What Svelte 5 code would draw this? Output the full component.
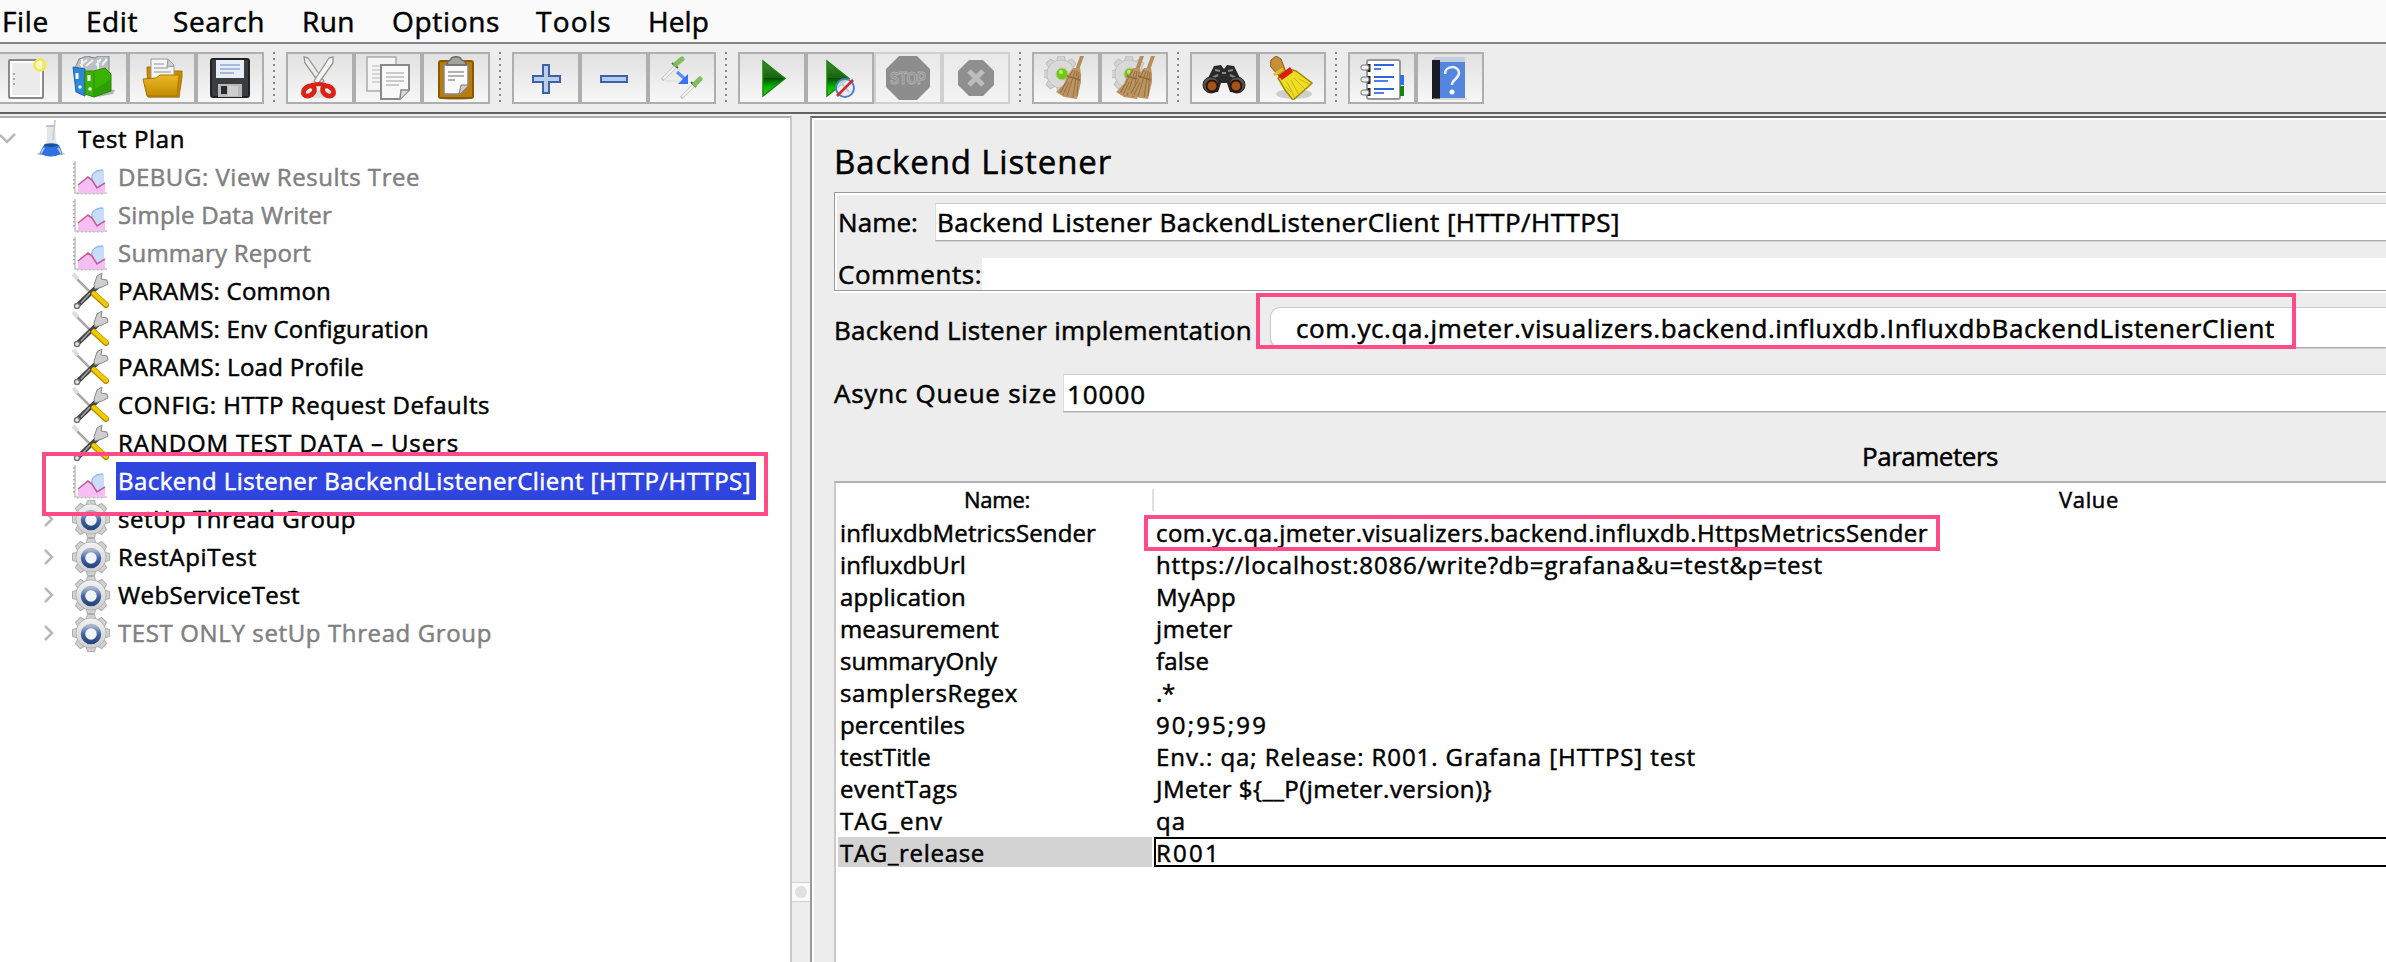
<script>
  // Spreads letters so that a label takes its nominal width.
  function fit(node, width) {
    if (!width) return;
    const natural = node.getBoundingClientRect().width;
    node.style.letterSpacing = (width - natural) / node.textContent.length + 'px';
  }

  const menus = [['File', 47, 2], ['Edit', 52, 86], ['Search', 92, 173], ['Run', 53, 302], ['Options', 108, 392], ['Tools', 76, 536], ['Help', 61, 648]];
  const menuItems = menus.map((m, i) => ({ text: m[0], w: m[1], gap: i ? m[2] - menus[i - 1][2] - menus[i - 1][1] : m[2] }));

  const groups = [
    ['new', 'templates', 'open', 'save'],
    ['cut', 'copy', 'paste'],
    ['plus', 'minus', 'toggle'],
    ['play', 'playNow', 'stop', 'shutdown'],
    ['clear', 'clearAll'],
    ['find', 'broom'],
    ['list', 'help']
  ];

  const tree = [
    { t: 'DEBUG: View Results Tree', w: 302, icon: 'chart', off: true },
    { t: 'Simple Data Writer', w: 214, icon: 'chart', off: true },
    { t: 'Summary Report', w: 193, icon: 'chart', off: true },
    { t: 'PARAMS: Common', w: 213, icon: 'tools' },
    { t: 'PARAMS: Env Configuration', w: 311, icon: 'tools' },
    { t: 'PARAMS: Load Profile', w: 246, icon: 'tools' },
    { t: 'CONFIG: HTTP Request Defaults', w: 372, icon: 'tools' },
    { t: 'RANDOM TEST DATA – Users', w: 341, icon: 'tools' },
    { t: 'Backend Listener BackendListenerClient [HTTP/HTTPS]', w: 633, icon: 'chart', sel: true },
    { t: 'setUp Thread Group', w: 238, icon: 'gear' },
    { t: 'RestApiTest', w: 139, icon: 'gear' },
    { t: 'WebServiceTest', w: 182, icon: 'gear' },
    { t: 'TEST ONLY setUp Thread Group', w: 374, icon: 'gear', off: true }
  ];

  const params = [
    ['influxdbMetricsSender', 256, 'com.yc.qa.jmeter.visualizers.backend.influxdb.HttpsMetricsSender', 772],
    ['influxdbUrl', 126, 'https://localhost:8086/write?db=grafana&u=test&p=test', 667],
    ['application', 126, 'MyApp', 80],
    ['measurement', 159, 'jmeter', 77],
    ['summaryOnly', 157, 'false', 53],
    ['samplersRegex', 178, '.*', 19],
    ['percentiles', 125, '90;95;99', 112],
    ['testTitle', 91, 'Env.: qa; Release: R001. Grafana [HTTPS] test', 540],
    ['eventTags', 118, 'JMeter ${__P(jmeter.version)}', 336],
    ['TAG_env', 103, 'qa', 30],
    ['TAG_release', 145, 'R001', 65]
  ];
</script>

{#snippet gearShape()}
  <g fill="#d2d2d2" stroke="#adadad" stroke-width="1">
    {#each [0, 45, 90, 135, 180, 225, 270, 315] as a}
      <path d="M13.500 8L15.500 .5h7l2 7.500z" transform="rotate({a} 19 19)" />
    {/each}
    <circle cx="19" cy="19" r="15" />
  </g>
  <circle cx="19" cy="19" r="14.500" fill="url(#steel)" />
{/snippet}

{#snippet greyGear()}
  <g fill="#d3d3d3" stroke="#bdbdbd">
    {#each [0, 45, 90, 135, 180, 225, 270, 315] as a}
      <path d="M12 7L14 0h6l2 7z" transform="rotate({a} 17 18)" />
    {/each}
    <circle cx="17" cy="18" r="14" />
  </g>
  <circle cx="17" cy="18" r="13.500" fill="#d9d9d9" />
  <circle cx="18" cy="18" r="6" fill="#73c516" stroke="#b7cfa0" />
  <circle cx="17" cy="16" r="2" fill="#b4f36c" />
{/snippet}

{#snippet besom(dx)}
  <g transform="translate({dx} 0)">
    <path d="M36 0h4l-5 14h-4z" fill="#b68c58" />
    <path d="M29 12h7l1 6v8l-4 17-13-2-8-5 8-8 3-8z" fill="#bd9562" />
    <path d="M23 20l13 4" stroke="#92683b" stroke-width="1.500" />
    <path d="M29 14L16 37M31 15l-8 25M33 15l-4 26M35 16l-2 24M21 28l-4 8M25 26l-6 13" stroke="#92703f" stroke-width="1" fill="none" />
  </g>
{/snippet}

{#snippet icon(name)}
  <svg width="44" height="44" viewBox="0 0 44 44">
    {#if name === 'new'}
      <rect x="5" y="4" width="34" height="38" rx="1" fill="#fff" stroke="#8a8a86" stroke-width="2" />
      <rect x="8" y="7" width="28" height="32" fill="#ececec" />
      <path d="M9 18h2M9 23h2M9 28h2" stroke="#aaa" stroke-width="2" />
      <circle cx="36" cy="9" r="5.500" fill="#fbfbb0" fill-opacity=".8" stroke="#f1e94f" stroke-width="2.500" />
    {:else if name === 'templates'}
      <path d="M33 33l10 1-2 4-16 3z" fill="#999" opacity=".7" />
      <path d="M3 12l4-9 8-3 8 2 3-2h11v20H3z" fill="#b9bfc2" stroke="#7e888e" />
      <path d="M8 9l7-5M14 10l7-6M24 9l5-6M30 9l5-6M26 4v10M10 3v8" stroke="#f1f1f1" stroke-width="2" />
      <path d="M1 11l12 2v27L4 36z" fill="#2f86d8" stroke="#1c61ad" />
      <path d="M5 17v6" stroke="#fff" stroke-width="3" /><circle cx="8" cy="31" r="1.700" fill="#fff" />
      <path d="M13 15l9 2v24l-9-3z" fill="#45b80d" />
      <path d="M22 15l11-3 6 6v17l-17 6-9-3V15z" fill="#39b300" stroke="#2b8a00" />
      <path d="M22 17v24" stroke="#2b8a00" /><path d="M23 33l16-10v12l-16 6z" fill="#238b00" opacity=".5" />
      <path d="M17 19v6" stroke="#fff" stroke-width="3" /><circle cx="18" cy="33" r="1.700" fill="#fff" />
    {:else if name === 'open'}
      <path d="M6 38h34v4H8z" fill="#aaa" opacity=".7" />
      <path d="M7 11h8l3 4h24v6l-3 20H8z" fill="#c88b00" stroke="#a87300" />
      <path d="M11 3h17l6 6v16H11z" fill="#f4f4f4" stroke="#999" /><path d="M28 3l-1 8 7-1" fill="#ccc" stroke="#8b9b9b" />
      <path d="M14 8h10M14 12h14M14 16h17" stroke="#b4b4b4" stroke-width="1.500" />
      <path d="M3 23l13-1 4-3h19l-2 21H7z" fill="url(#gold)" stroke="#a87600" />
    {:else if name === 'save'}
      <rect x="3" y="3" width="38" height="38" rx="2" fill="#3b3d3f" stroke="#222" stroke-width="2" />
      <rect x="8" y="4" width="28" height="18" fill="#e7eef7" />
      <path d="M12 9h20M12 13h20M12 17h14" stroke="#8fa9cd" stroke-width="1.500" />
      <rect x="10" y="28" width="24" height="13" fill="#b9b9b9" /><rect x="13" y="30" width="6" height="8" fill="#292929" />
      <path d="M20 30h10v10H20z" fill="#cfcfcf" />
    {:else if name === 'cut'}
      <ellipse cx="22" cy="38" rx="14" ry="4" fill="#ddd" />
      <path d="M6 1l4 1 16 23-4 3L7 7z" fill="#ececec" stroke="#96968f" stroke-width="1.300" />
      <path d="M35 1l-4 1-15 23 4 3L35 7z" fill="#f6f6f6" stroke="#96968f" stroke-width="1.300" />
      <g fill="none" stroke="#da2315" stroke-width="5"><ellipse cx="11" cy="35" rx="6" ry="4.500" transform="rotate(-38 11 35)" /><ellipse cx="30" cy="35" rx="6" ry="4.500" transform="rotate(38 30 35)" /><path d="M13 29l8-1 7 1" stroke-width="4" /></g>
    {:else if name === 'copy'}
      <rect x="1" y="1" width="29" height="34" fill="#f4f4f4" stroke="#aaa" stroke-width="1.500" />
      <path d="M6 10h18M6 14h18M6 18h18M6 22h18M6 26h14" stroke="#ccc" stroke-width="1.300" />
      <path d="M15 9h28v25l-9 9H15z" fill="#f9f9f9" stroke="#898a85" stroke-width="2" />
      <path d="M43 34h-8l-1 9" fill="#ddd" stroke="#898a85" stroke-width="1.500" />
      <path d="M20 17h18M20 21h18M20 25h18M20 29h13" stroke="#bbb" stroke-width="1.500" />
    {:else if name === 'paste'}
      <ellipse cx="22" cy="42" rx="16" ry="2" fill="#bbb" />
      <rect x="5" y="5" width="34" height="37" rx="2" fill="#b77b0e" stroke="#8a5800" stroke-width="2" />
      <path d="M10 9h24v21l-8 8H10z" fill="#fafafa" stroke="#888" stroke-width="1.500" />
      <path d="M34 29h-7l-2 9" fill="#ccc" stroke="#777" />
      <path d="M14 16h16M14 20h16M14 24h7" stroke="#999" stroke-width="1.500" />
      <path d="M13 9c0-5 3-4 4-6 1-3 9-3 10 0 1 2 5 1 5 6z" fill="#a3a399" stroke="#6b6b65" stroke-width="1.500" />
    {:else if name === 'plus'}
      <path d="M19 9h6v11h11v6H25v11h-6V26H9v-6h10z" fill="#b9cdec" stroke="#3d62a8" stroke-width="2" />
    {:else if name === 'minus'}
      <rect x="9" y="20" width="26" height="6" fill="#b4caec" stroke="#3d62a8" stroke-width="2" />
    {:else if name === 'toggle'}
      <path d="M2 24l13-13M21 42l13-13" stroke="#c4c4c4" stroke-width="3.500" /><path d="M3 23l12-12M22 41l12-12" stroke="#f5f5f5" stroke-width="1.800" />
      <path d="M12 7l6 5M31 26l5 5" stroke="#47763a" stroke-width="2" />
      <path d="M16 8l6-5M35 28l5-5" stroke="#83bd5a" stroke-width="5" stroke-linecap="round" />
      <path d="M5 25h17" stroke="#ddd" /><path d="M17 16l8 7" stroke="#5c8cf7" stroke-width="3" /><path d="M28 18v10H18z" fill="#3a70f2" />
    {:else if name === 'play' || name === 'playNow'}
      {#if name === 'play'}
        <path d="M13 5l22 17.500L13 40z" fill="url(#go)" stroke="#16860b" stroke-width="1.500" />
      {:else}
        <path d="M9 5l22 17.500L9 40z" fill="url(#go)" stroke="#16860b" stroke-width="1.500" />
        <circle cx="27" cy="32" r="9" fill="#e5eef9" fill-opacity=".8" stroke="#4d83c5" stroke-width="2" />
        <path d="M24 28l7 8" stroke="#b5c9e3" stroke-width="2" /><path d="M19 40l16-16" stroke="#d92727" stroke-width="2.500" />
      {/if}
    {:else if name === 'stop'}
      <path d="M13 0h18l13 13v18L31 44H13L0 31V13z" fill="#8d8d8d" />
      <text x="22" y="28" text-anchor="middle" textLength="36" lengthAdjust="spacingAndGlyphs" class="stopText">STOP</text>
    {:else if name === 'shutdown'}
      <path d="M15 4h14l11 11v14L29 40H15L4 29V15z" fill="#8f8f8f" />
      <path d="M15 15l14 14M29 15L15 29" stroke="#bdbdbd" stroke-width="5" />
    {:else if name === 'clear'}
      {@render greyGear()}{@render besom(0)}
    {:else if name === 'clearAll'}
      {@render greyGear()}{@render besom(-8)}{@render besom(3)}
    {:else if name === 'find'}
      <path d="M12 10l7-1 3 4 3-4 7 1 4 8 6 12-5 7-9-1-3-9h-6l-3 9-9 1-5-7 6-12z" fill="#292929" />
      <path d="M13 14l5 1M31 14l-5 1M8 23l8-4M36 23l-8-4M20 17h4" stroke="#888" stroke-width="2" />
      <circle cx="9" cy="29" r="8" fill="#555" stroke="#222" /><circle cx="35" cy="29" r="8" fill="#555" stroke="#222" />
      <circle cx="10" cy="30" r="5.500" fill="#a75218" stroke="#301307" stroke-width="2" /><circle cx="34" cy="30" r="5.500" fill="#a75218" stroke="#301307" stroke-width="2" />
    {:else if name === 'broom'}
      <ellipse cx="24" cy="38" rx="18" ry="5" fill="#aaa" opacity=".5" />
      <path d="M1 4l5-4 5 3 5 13-7 4L0 10z" fill="#c59038" stroke="#8b5d15" />
      <path d="M8 22l11-9 7 2 16 12-4 4-15 13-8-10z" fill="#efdc25" stroke="#9e8a00" stroke-width="1.500" />
      <path d="M17 26l8 16M21 24l8 15M24 22l12 12M16 31l5 5M29 23l10 5" stroke="#c9b51a" />
      <path d="M4 19l9-6" stroke="#e2c61f" stroke-width="3" /><path d="M8 20l12-9 3 5-11 8z" fill="#d7210f" />
    {:else if name === 'list'}
      <rect x="7" y="4" width="33" height="39" rx="2" fill="#fdfdfd" stroke="#999" stroke-width="2" />
      <path d="M14 9h20M14 21h20M14 33h20" stroke="#2b65e5" stroke-width="2" /><path d="M14 13h7M14 25h14M14 37h10" stroke="#4e80ed" stroke-width="2" />
      <path d="M9 8v8M9 20v8M9 32v8" stroke="#222" stroke-width="3" />
      <g fill="#eee" stroke="#777"><rect x="1" y="9" width="8" height="5" rx="2" /><rect x="1" y="21" width="8" height="5" rx="2" /><rect x="1" y="34" width="8" height="5" rx="2" /></g>
      <path d="M42 19v10" stroke="#3470e3" stroke-width="4" /><path d="M42 30v10" stroke="#15850e" stroke-width="4" />
    {:else if name === 'help'}
      <path d="M5 4l4-3h28v41H5z" fill="#5586df" /><path d="M7 1h30v5H5z" fill="#c3cfdf" /><path d="M4 4h8v39H4z" fill="#191c22" />
      <path d="M5 43h34" stroke="#bbb" />
      <path d="M17 18c0-9 14-9 14-1 0 6-7 6-7 12" fill="none" stroke="#eef5ff" stroke-width="2.500" /><circle cx="24" cy="36" r="2.500" fill="#fff" />
    {/if}
  </svg>
{/snippet}

{#snippet nodeIcon(name)}
  <svg width="38" height="38" viewBox="0 0 38 38">
    {#if name === 'chart'}
      <path d="M3 3v32h32" fill="none" stroke="#c4c4c4" stroke-width="1.500" /><path d="M2 5v28" stroke="#999" stroke-width="1.500" stroke-dasharray="1.500 2.500" /><path d="M5 36h28" stroke="#aaa" stroke-dasharray="1.500 2.500" />
      <path d="M21 27c-3-6 0-15 11-15v14l-7 6z" fill="#c9ddfb" /><path d="M20 22c-1-6 3-10 11-10" fill="none" stroke="#93baf5" stroke-width="1.500" />
      <path d="M6 27l10-8 5 3 4 9 8-5v9H6z" fill="#f7bef4" /><path d="M6 27l10-8 4 3 5 8 8-5" fill="none" stroke="#c65c94" stroke-width="1.600" />
    {:else if name === 'tools'}
      <path d="M3 5L18 20" stroke="#aaa" stroke-width="2.500" /><path d="M1 2l5 5" stroke="#ddd" stroke-width="4" />
      <path d="M6 33L27 13" stroke="#454545" stroke-width="5" /><path d="M9 31l9-10" stroke="#a1a1a1" stroke-width="1.500" />
      <path d="M22 13l3-9 5-3-1 6 6 1 1 4-6 3-7 2z" fill="#cfcfcf" stroke="#888" />
      <path d="M22 22l12 11" stroke="#b38c00" stroke-width="6" stroke-linecap="round" /><path d="M22 21.500l12 11" stroke="#f4c900" stroke-width="4.300" stroke-linecap="round" />
      <circle cx="5" cy="34" r="2.500" fill="#eee" stroke="#777" stroke-width="1.500" />
    {:else}
      {@render gearShape()}
      <circle cx="19" cy="20" r="8" fill="#f1f5fb" stroke="url(#ring)" stroke-width="4.500" />
    {/if}
  </svg>
{/snippet}

<svg class="defs" width="0" height="0">
  <defs>
    <linearGradient id="steel" x2="0" y2="1"><stop stop-color="#f2f2f2" /><stop offset="1" stop-color="#cecece" /></linearGradient>
    <linearGradient id="ring" x2="0" y2="1"><stop stop-color="#a9b4cb" /><stop offset=".5" stop-color="#4466a5" /><stop offset="1" stop-color="#28467f" /></linearGradient>
    <linearGradient id="gold" x2="0" y2="1"><stop stop-color="#e8b928" /><stop offset="1" stop-color="#c58c00" /></linearGradient>
    <linearGradient id="go" x2="0" y2="1"><stop stop-color="#3c8b32" /><stop offset=".49" stop-color="#17610f" /><stop offset=".5" stop-color="#074f00" /><stop offset=".75" stop-color="#08b900" /><stop offset="1" stop-color="#3cc52a" /></linearGradient>
  </defs>
</svg>

<div class="app">
  <nav class="menu">
    {#each menuItems as m}
      <span class="menuItem" style="margin-left:{m.gap}px;width:{m.w}px"><span use:fit={m.w}>{m.text}</span></span>
    {/each}
  </nav>

  <div class="toolbar">
    {#each groups as g, gi}
      {#if gi}<i class="dots"></i>{/if}
      {#each g as name}
        <button class:off={name === 'stop' || name === 'shutdown'}>{@render icon(name)}</button>
      {/each}
    {/each}
  </div>

  <main>
    <section class="tree">
      <div class="node root">
        <svg class="arrow" width="16" height="12" viewBox="0 0 16 12"><path d="M0 2l7 7 8-8" fill="none" stroke="#b8b8b8" stroke-width="2.500" /></svg>
        <svg class="flask" width="28" height="38" viewBox="0 0 28 38">
          <ellipse cx="14" cy="34" rx="14" ry="1.500" fill="#aaa" />
          <path d="M10 6h8l1 15 6 12q-11 7-22 0l7-13z" fill="#e2e6e9" />
          <path d="M7 25h15l3.500 8q-12 7-23 0z" fill="#2f72df" /><ellipse cx="14" cy="25" rx="7" ry="1.800" fill="#164f9a" />
          <path d="M7 28l-3 5M21 28l3 5" stroke="#a5c5ee" stroke-width="2" />
          <path d="M18 0l-2 20" stroke="#cdcdcd" stroke-width="1.800" /><path d="M9 6h9" stroke="#a8b8d0" stroke-width="1.500" />
        </svg>
        <span class="label"><span use:fit={107}>Test Plan</span></span>
      </div>
      {#each tree as n}
        <div class="node child" class:disabled={n.off}>
          <span class="twist">
            {#if n.icon === 'gear'}<svg width="12" height="18" viewBox="0 0 12 18"><path d="M3 2l7 7-7 7" fill="none" stroke="#b8b8b8" stroke-width="2.500" /></svg>{/if}
          </span>
          {@render nodeIcon(n.icon)}
          <span class="label" class:selected={n.sel}><span use:fit={n.w}>{n.t}</span></span>
        </div>
      {/each}
      <div class="mark markTree"></div>
    </section>

    <div class="divider"><div class="knob"><i></i></div></div>

    <section class="panel">
      <h1><span use:fit={278}>Backend Listener</span></h1>
      <div class="box">
        <div class="row nameRow"><label for="nm"><span use:fit={80}>Name:</span></label>
          <div class="field" id="nm"><span use:fit={683}>Backend Listener BackendListenerClient [HTTP/HTTPS]</span></div></div>
        <div class="row commentRow"><label for="cm"><span use:fit={144}>Comments:</span></label><div class="comment" id="cm"></div></div>
      </div>
      <div class="row implRow"><label for="im"><span use:fit={418}>Backend Listener implementation</span></label>
        <div class="combo" id="im"><span use:fit={979}>com.yc.qa.jmeter.visualizers.backend.influxdb.InfluxdbBackendListenerClient</span></div>
        <div class="mark markImpl"></div>
      </div>
      <div class="row queueRow"><label for="qu"><span use:fit={223}>Async Queue size</span></label><div class="field queue" id="qu"><span use:fit={79}>10000</span></div></div>
      <div class="caption"><span use:fit={136}>Parameters</span></div>
      <div class="table">
        <div class="head"><div class="hName"><span use:fit={66}>Name:</span></div><div class="hValue"><span use:fit={60}>Value</span></div></div>
        {#each params as p, i}
          <div class="line" class:active={i === 10}>
            <div class="key"><span use:fit={p[1]}>{p[0]}</span></div>
            <div class="value"><span use:fit={p[3]}>{p[2]}</span></div>
            {#if i === 0}<div class="mark markSender"></div>{/if}
          </div>
        {/each}
      </div>
    </section>
  </main>
</div>

<style>
  :global(body) { background: #ededed; overflow: hidden; }
  .app { width: 2386px; height: 962px; overflow: hidden; display: flex; flex-direction: column; font-family: "Open Sans", "Noto Sans", sans-serif; font-size: 24px; color: #000; -webkit-text-stroke: .5px; }
  .app * { box-sizing: border-box; white-space: nowrap; }
  .defs { position: absolute; }
  .menu { flex: none; height: 44px; background: #fafafa; border-bottom: 2px solid #848484; display: flex; align-items: center; font-size: 28px; line-height: 42px; }
  .menuItem { display: block; }
  .toolbar { flex: none; height: 70px; border-bottom: 2px solid #636363; display: flex; padding-top: 8px; background: #ededed; margin-left: -8px; }
  button { width: 68px; height: 52px; padding: 0; border: 2px solid #aeaeae; background: linear-gradient(#e1e1e1, #f7f7f7); display: grid; place-items: center; }
  button.off { border-color: #d0d0d0; background: linear-gradient(#e9e9e9, #f3f3f3); }
  .dots { width: 2px; height: 52px; margin: 0 11px 0 9px; background: repeating-linear-gradient(#888 0 2px, transparent 2px 6px); }
  .stopText { font: bold 16px "Liberation Sans", sans-serif; fill: #8d8d8d; stroke: #b0b0b0; stroke-width: 1px; }
  main { flex: 1; display: flex; padding-top: 2px; min-height: 0; }
  .tree { position: relative; flex: none; width: 792px; background: #fff; border-top: 2px solid #b0b0b0; border-right: 2px solid #c9c9c9; padding-top: 2px; }
  .node { height: 38px; display: flex; align-items: center; line-height: 38px; }
  .child { padding-left: 42px; }
  .child > svg { margin-right: 5px; flex: none; }
  .twist { width: 30px; display: flex; }
  .arrow { margin-right: 21px; }
  .flask { margin-right: 13px; }
  .label { height: 38px; }
  .child .label { padding: 0 2px; margin-left: 1px; min-width: 0; }
  .disabled { color: #808080; }
  .label.selected { background: #3045e0; color: #fff; width: 640px; }
  .mark { position: absolute; border: 4px solid #ff4c88; pointer-events: none; }
  .markTree { left: 42px; top: 334px; width: 726px; height: 64px; }
  .divider { flex: none; width: 18px; background: #ededed; display: flex; flex-direction: column; justify-content: flex-end; }
  .knob { height: 20px; margin-bottom: 60px; border-top: 1px solid #d0d0d0; border-bottom: 1px solid #d0d0d0; background: #fafafa; display: grid; place-items: center; }
  .knob i { width: 12px; height: 12px; border-radius: 50%; background: #e0e0e0; }
  .panel { flex: 1; min-width: 0; border-left: 2px solid #999; border-top: 2px solid #666; box-shadow: inset 2px 2px #fff; padding-left: 22px; display: flex; flex-direction: column; font-size: 26px; }
  h1 { margin: 0; font-weight: 400; font-size: 33px; line-height: 44px; height: 74px; padding-top: 22px; flex: none; }
  .row { display: flex; flex: none; position: relative; }
  .row label { flex: none; }
  .box { flex: none; height: 99px; border: 1px solid #999; border-right: 0; box-shadow: inset 2px 2px #fff, 0 2px #fff; padding: 10px 0 0 3px; margin-bottom: 16px; }
  .nameRow { line-height: 38px; height: 55px; }
  .nameRow label { width: 97px; }
  .field { flex: 1; height: 38px; line-height: 36px; background: #fff; border-top: 1px solid #ccc; border-left: 1px solid #ddd; border-bottom: 1px solid #aaa; box-shadow: 0 1px #d5d5d5; padding-left: 1px; }
  .commentRow { line-height: 33px; }
  .commentRow label { width: 144px; }
  .comment { flex: 1; height: 32px; background: #fff; }
  .implRow { height: 67px; line-height: 46px; }
  .implRow label { width: 436px; }
  .combo { flex: 1; height: 41px; line-height: 40px; background: #fff; border: 1px solid #ccc; border-bottom-color: #aaa; border-right: 0; border-radius: 10px 0 0 10px; padding-left: 25px; box-shadow: 0 1px 1px #ccc; }
  .markImpl { left: 422px; top: -14px; width: 1040px; height: 56px; }
  .queueRow { height: 64px; line-height: 39px; }
  .queueRow label { width: 229px; }
  .queue { padding-left: 3px; line-height: 38px; }
  .caption { flex: none; height: 43px; padding-left: 1028px; line-height: 36px; }
  .table { flex: 1; background: #fff; border-top: 2px solid #b0b0b0; border-left: 2px solid #c9c9c9; font-size: 24px; }
  .head { height: 34px; display: flex; font-size: 22px; line-height: 32px; }
  .hName { width: 318px; height: 22px; margin-top: 6px; border-right: 2px solid #e0e0e0; line-height: 21px; padding-left: 128px; }
  .hValue { padding-left: 905px; }
  .line { position: relative; height: 32px; display: flex; line-height: 32px; }
  .key { width: 316px; margin: 0 0 0 2px; padding-left: 2px; height: 30px; }
  .value { flex: 1; padding-left: 2px; height: 30px; }
  .active .key { width: 314px; margin-right: 2px; background: #d3d3d3; }
  .active .value { border: 2px solid #000; border-right: 0; padding-left: 0; line-height: 27px; }
  .markSender { left: 308px; top: -2px; width: 796px; height: 36px; }
</style>
